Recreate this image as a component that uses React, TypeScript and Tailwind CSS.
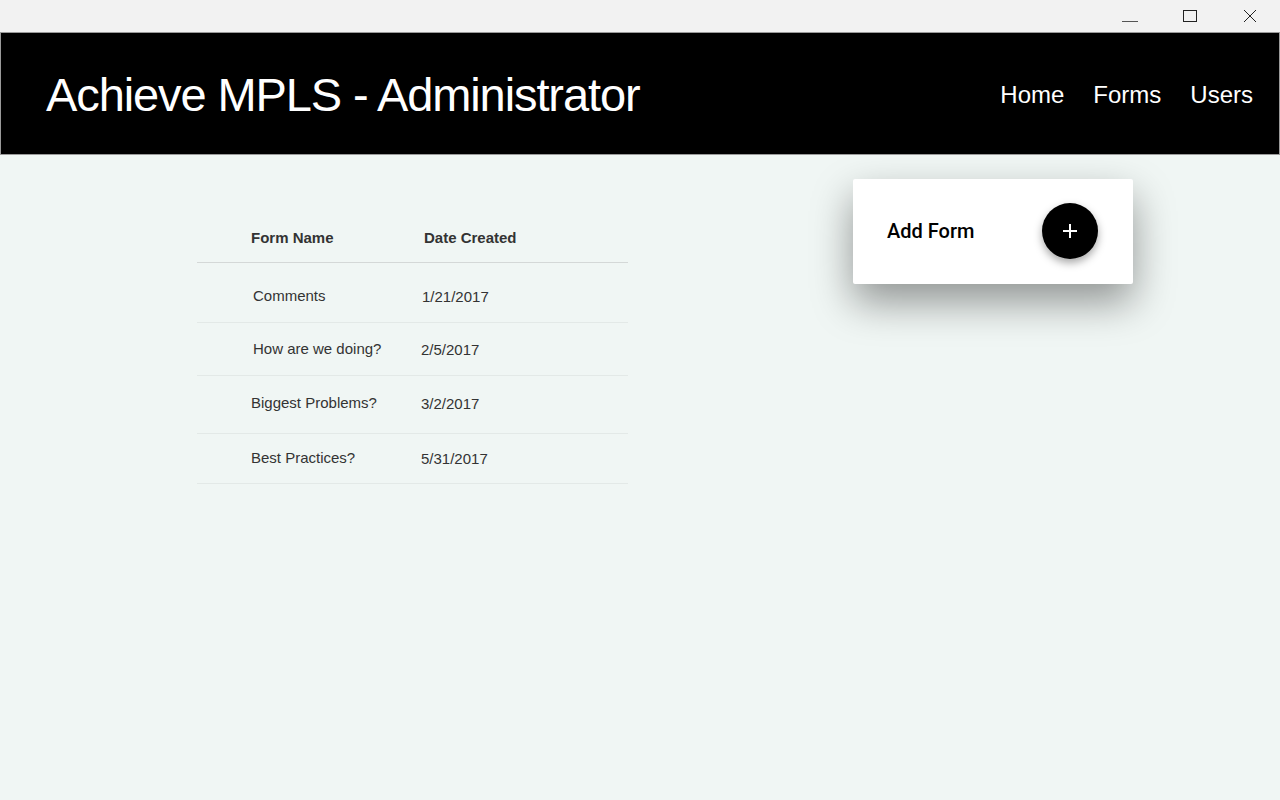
import React from 'react';

const rows = [
  { name: 'Comments', date: '1/21/2017', h: 'h-[60px]', nx: 'pl-[56px]', dx: 'pl-[55px]', pt: 'pt-[24px]' },
  { name: 'How are we doing?', date: '2/5/2017', h: 'h-[53px]', nx: 'pl-[56px]', dx: 'pl-[54px]', pt: 'pt-[17px]' },
  { name: 'Biggest Problems?', date: '3/2/2017', h: 'h-[58px]', nx: 'pl-[54px]', dx: 'pl-[54px]', pt: 'pt-[18px]' },
  { name: 'Best Practices?', date: '5/31/2017', h: 'h-[50px]', nx: 'pl-[54px]', dx: 'pl-[54px]', pt: 'pt-[15px]' },
];

const App = () => {
  return (
    <div className="w-[1280px] h-[800px] flex flex-col bg-[#f0f6f4] overflow-hidden font-['Liberation_Sans',Arial,sans-serif]">
      {/* window title bar */}
      <div className="h-[32px] bg-[#f2f2f2] flex justify-end items-start shrink-0">
        <div className="w-[60px] h-[32px] flex items-center justify-center">
          <div className="w-[16px] h-px bg-[#555] mt-[10px]" />
        </div>
        <div className="w-[60px] h-[32px] flex items-center justify-center">
          <div className="w-[14px] h-[12px] border border-[#222]" />
        </div>
        <div className="w-[60px] h-[32px] flex items-center justify-center">
          <svg width="14" height="14" viewBox="0 0 14 14">
            <path d="M1 1 L13 13 M13 1 L1 13" stroke="#222" strokeWidth="1" />
          </svg>
        </div>
      </div>

      {/* header */}
      <div className="h-[123px] bg-black border border-[#9a9a9a] flex items-center justify-between shrink-0">
        <h1 className="text-white text-[47px] leading-none pl-[45px] pt-[1px] tracking-[-1.1px]">Achieve MPLS - Administrator</h1>
        <nav className="flex gap-[29px] pr-[26px] text-white text-[24px] leading-none pt-[3px]">
          <span>Home</span>
          <span>Forms</span>
          <span>Users</span>
        </nav>
      </div>

      <div className="flex flex-1">
        {/* table */}
        <div className="w-[431px] ml-[197px] mt-[74px]">
          <div className="h-[34px] border-b border-[#d4d8d7] flex text-[15px] leading-[18px] font-bold text-[#333]">
            <div className="pl-[54px] w-[227px]">Form Name</div>
            <div>Date Created</div>
          </div>
          {rows.map((r) => (
            <div key={r.name} className={`${r.h} border-b border-[#e3e9e7] flex text-[15px] leading-[18px] text-[#333] ${r.pt}`}>
              <div className={`${r.nx} w-[170px] whitespace-nowrap`}>{r.name}</div>
              <div className={`${r.dx} pt-[1px]`}>{r.date}</div>
            </div>
          ))}
        </div>

        {/* add form card */}
        <div className="ml-[225px] mt-[24px]">
          <div className="w-[280px] h-[105px] bg-white rounded-[2px] shadow-[0_18px_40px_rgba(0,0,0,0.4)] flex items-center justify-between pl-[34px] pr-[35px]">
            <span className="font-['Roboto',sans-serif] font-medium text-[20px] text-black pb-[2px]">Add Form</span>
            <button className="w-[56px] h-[56px] rounded-full bg-black flex items-center justify-center shadow-[0_4px_8px_rgba(0,0,0,0.35)] mb-[2px]">
              <svg width="16" height="16" viewBox="0 0 16 16">
                <path d="M8 1 V15 M1 8 H15" stroke="white" strokeWidth="2" />
              </svg>
            </button>
          </div>
        </div>
      </div>
    </div>
  );
};

export default App;
